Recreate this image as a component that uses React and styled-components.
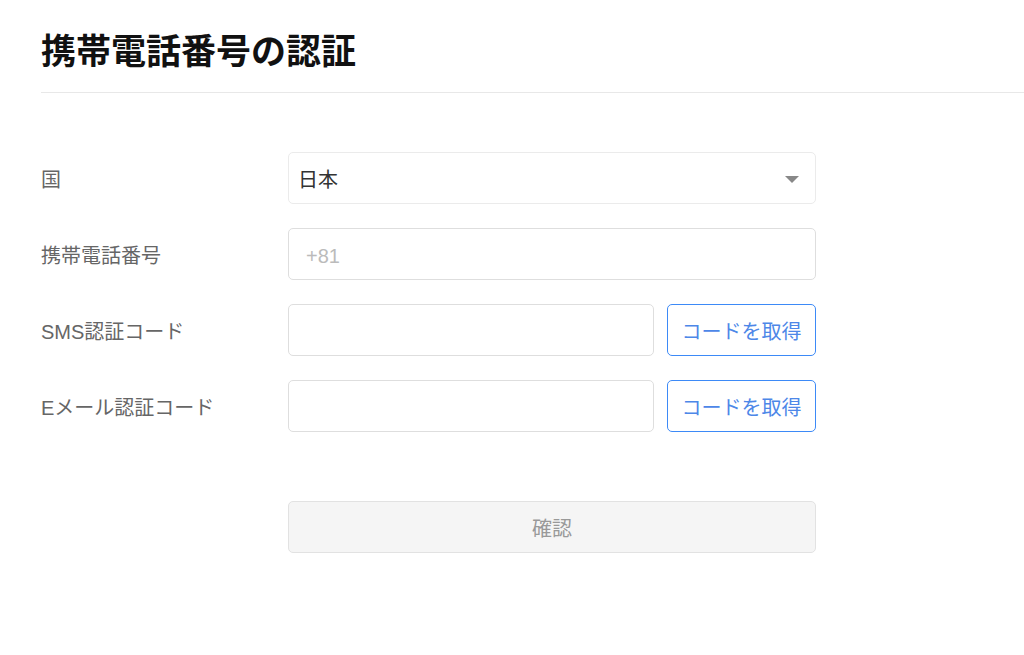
import React from "react";
import styled, { createGlobalStyle } from "styled-components";

const GlobalStyle = createGlobalStyle`
  body {
    margin: 0;
    background: #ffffff;
    font-family: "Liberation Sans", "Noto Sans CJK JP", sans-serif;
  }
`;

const Page = styled.div`
  padding: 29px 0 0 41px;
`;

const Title = styled.h1`
  margin: 0;
  font-size: 35px;
  font-weight: 700;
  color: #111;
  line-height: 46px;
  padding-bottom: 17px;
  border-bottom: 1px solid #e8e8e8;
`;

const Form = styled.div`
  display: flex;
  flex-direction: column;
  gap: 24px;
  margin-top: 59px;
  width: 775px;
`;

const Row = styled.div`
  display: grid;
  grid-template-columns: 247px 528px;
  align-items: center;
`;

const Label = styled.div`
  font-size: 20px;
  color: #666;
`;

const Field = styled.div`
  display: flex;
  gap: 13px;
`;

const Box = styled.div`
  position: relative;
  flex: 1;
  height: 52px;
  box-sizing: border-box;
  border: 1px solid ${(p) => (p.$light ? "#ebebeb" : "#dedede")};
  border-radius: 5px;
  display: flex;
  align-items: center;
  padding: 0 ${(p) => (p.$pad ? p.$pad : 17)}px;
  padding-top: ${(p) => (p.$placeholder ? 4 : 0)}px;
  font-size: 20px;
  color: ${(p) => (p.$placeholder ? "#bbb" : "#333")};
`;

const Arrow = styled.span`
  position: absolute;
  right: 16px;
  top: 23px;
  width: 0;
  height: 0;
  border-left: 7px solid transparent;
  border-right: 7px solid transparent;
  border-top: 7px solid #888;
`;

const CodeButton = styled.button`
  width: 149px;
  height: 52px;
  box-sizing: border-box;
  border: 1px solid #3d8af7;
  border-radius: 5px;
  background: #fff;
  color: #4d87e8;
  font-family: inherit;
  font-size: 20px;
  padding: 0;
`;

const Submit = styled.button`
  width: 528px;
  height: 52px;
  box-sizing: border-box;
  border: 1px solid #e2e2e2;
  border-radius: 5px;
  background: #f5f5f5;
  color: #999;
  font-family: inherit;
  font-size: 20px;
  padding: 0;
`;

const SubmitRow = styled.div`
  margin-top: 69px;
  padding-left: 247px;
`;

export default function App() {
  return (
    <>
      <GlobalStyle />
      <Page>
        <Title>携帯電話番号の認証</Title>
        <Form>
          <Row>
            <Label>国</Label>
            <Box $light $pad={9}>
              日本
              <Arrow />
            </Box>
          </Row>
          <Row>
            <Label>携帯電話番号</Label>
            <Box $placeholder>+81</Box>
          </Row>
          <Row>
            <Label>SMS認証コード</Label>
            <Field>
              <Box />
              <CodeButton>コードを取得</CodeButton>
            </Field>
          </Row>
          <Row>
            <Label>Eメール認証コード</Label>
            <Field>
              <Box />
              <CodeButton>コードを取得</CodeButton>
            </Field>
          </Row>
        </Form>
        <SubmitRow>
          <Submit>確認</Submit>
        </SubmitRow>
      </Page>
    </>
  );
}
